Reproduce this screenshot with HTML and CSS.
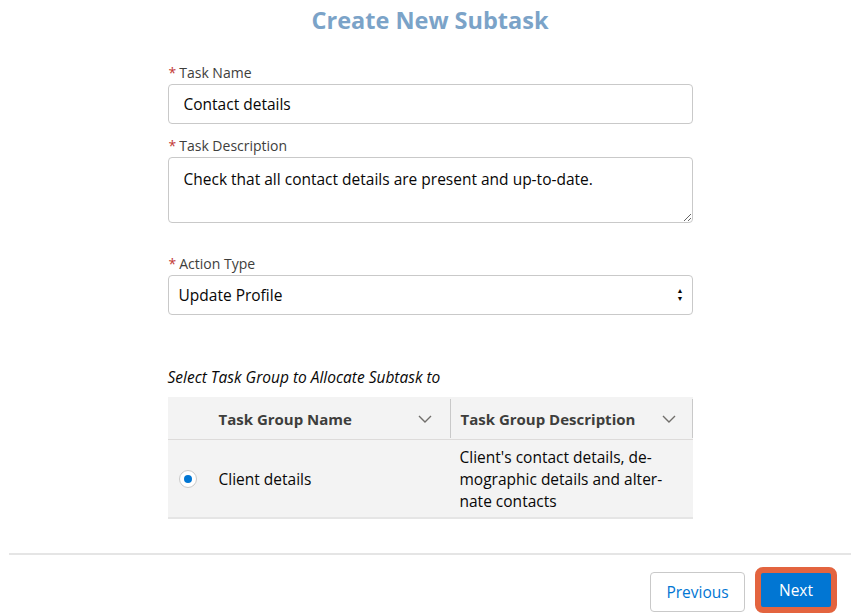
FILE: index.html
```html
<!DOCTYPE html>
<html lang="en">
<head>
<meta charset="utf-8">
<title>Create New Subtask</title>
<link rel="stylesheet" href="styles.css">
</head>
<body>
<div class="page">
  <h1 class="title">Create New Subtask</h1>
  <div class="form">
    <div class="field">
      <label class="label"><span class="req">*</span>Task Name</label>
      <input class="input" type="text" value="Contact details">
    </div>
    <div class="field">
      <label class="label"><span class="req">*</span>Task Description</label>
      <textarea class="textarea">Check that all contact details are present and up-to-date.</textarea>
    </div>
    <div class="field field-action">
      <label class="label"><span class="req">*</span>Action Type</label>
      <div class="select-wrap">
        <select class="select"><option>Update Profile</option></select>
        <span class="select-arrows"><span>&#9650;</span><span>&#9660;</span></span>
      </div>
    </div>
    <p class="caption">Select Task Group to Allocate Subtask to</p>
    <div class="table">
      <div class="thead">
        <div class="cell cell-radio"></div>
        <div class="cell cell-name th">
          <span>Task Group Name</span>
          <svg class="chev" viewBox="0 0 14 8" width="14" height="8"><path d="M1 1 L7 7 L13 1" fill="none" stroke="#706e6b" stroke-width="1.4"/></svg>
        </div>
        <div class="cell cell-desc th">
          <span>Task Group Description</span>
          <svg class="chev" viewBox="0 0 14 8" width="14" height="8"><path d="M1 1 L7 7 L13 1" fill="none" stroke="#706e6b" stroke-width="1.4"/></svg>
        </div>
      </div>
      <div class="trow">
        <div class="cell cell-radio"><span class="radio"><span class="dot"></span></span></div>
        <div class="cell cell-name">Client details</div>
        <div class="cell cell-desc desc">Client's contact details, de-<br>mographic details and alter-<br>nate contacts</div>
      </div>
    </div>
  </div>
  <div class="footer">
    <button class="btn btn-prev">Previous</button>
    <button class="btn btn-next">Next</button>
  </div>
</div>
</body>
</html>
```

FILE: styles.css
```css
* { box-sizing: border-box; }
html, body { margin: 0; padding: 0; background: #ffffff; }
body {
  font-family: "Open Sans", "Noto Sans", sans-serif;
  color: #080707;
}
.page {
  margin-left: 9px;
  width: 842px;
}
.title {
  margin: 0;
  height: 40px;
  line-height: 40px;
  text-align: center;
  font-size: 23.5px;
  font-weight: 700;
  color: #7ba3c8;
}
.form {
  width: 525px;
  margin: 23px auto 0;
}
.field { display: flex; flex-direction: column; margin-bottom: 12px; }
.field-action { margin-top: 31px; }
.label {
  font-size: 14px;
  line-height: 20px;
  color: #3e3e3c;
  margin-bottom: 1px;
}
.req { color: #c23934; margin-right: 3px; margin-left: 1px; }
.input, .textarea, .select {
  font-family: inherit;
  font-size: 15.5px;
  color: #080707;
  border: 1px solid #c9c9c9;
  border-radius: 4px;
  background: #fff;
  width: 100%;
  outline: none;
}
.input { height: 40px; padding: 0 15px; }
.textarea { height: 66px; padding: 10px 15px; resize: vertical; line-height: 22px; }
.select-wrap { position: relative; }
.select {
  height: 40px;
  padding: 0 28px 0 10px;
  appearance: none;
  -webkit-appearance: none;
}
.select-arrows {
  position: absolute;
  right: 9px;
  top: 12px;
  display: flex;
  flex-direction: column;
  font-size: 7px;
  line-height: 8px;
  color: #080707;
  pointer-events: none;
}
.caption {
  margin: 52px 0 9px;
  font-size: 15.5px;
  line-height: 21px;
  font-style: italic;
  color: #080707;
}
.table {
  background: #f3f3f3;
  border-bottom: 2px solid #e5e5e5;
}
.thead, .trow { display: flex; }
.thead { height: 43px; border-bottom: 1px solid #dddbda; }
.trow { height: 77px; align-items: center; }
.cell { display: flex; align-items: center; }
.cell-radio { width: 38px; justify-content: center; padding-left: 2px; }
.cell-name { width: 244px; padding-left: 13px; font-size: 15.5px; }
.cell-desc { flex: 1; padding-left: 10px; font-size: 15.5px; }
.th {
  font-size: 15px;
  font-weight: 700;
  color: #3e3e3c;
  justify-content: space-between;
  padding-right: 18px;
  height: 39px;
  align-self: flex-start;
  margin-top: 2px;
}
.thead .cell-desc { border-left: 1px solid #c9c9c9; border-right: 1px solid #c9c9c9; padding-right: 16px; }
.desc { line-height: 22px; }
.radio {
  width: 18px; height: 18px;
  border: 1px solid #c9c9c9;
  border-radius: 50%;
  background: #fff;
  display: flex; align-items: center; justify-content: center;
}
.dot { width: 8px; height: 8px; border-radius: 50%; background: #0176d3; }
.footer {
  margin-top: 34px;
  border-top: 2px solid #e5e5e5;
  padding: 12px 14px 0 0;
  display: flex;
  justify-content: flex-end;
  align-items: center;
  gap: 10px;
}
.btn {
  font-family: inherit;
  font-size: 15.5px;
  border-radius: 4px;
  cursor: pointer;
}
.btn-prev {
  height: 40px;
  width: 95px;
  margin-top: 4px;
  background: #fff;
  border: 1px solid #c9c9c9;
  color: #0176d3;
}
.btn-next {
  height: 46px;
  width: 82px;
  background: #0176d3;
  border: 6px solid #e3643f;
  border-radius: 8px;
  color: #fff;
}
```
